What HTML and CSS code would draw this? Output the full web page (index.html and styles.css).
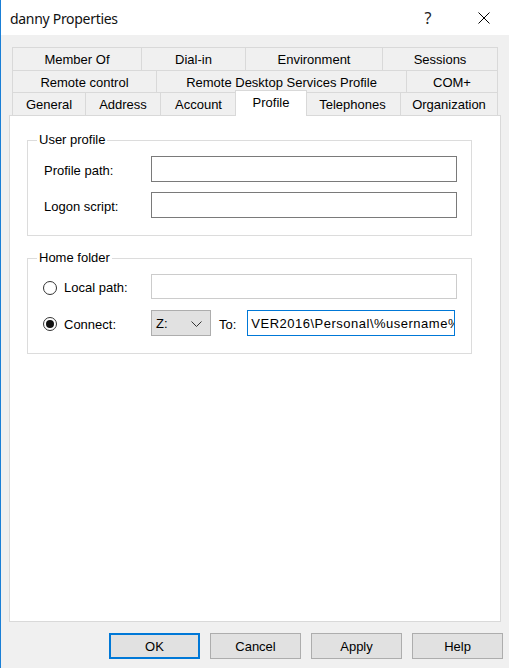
FILE: index.html
```html
<!DOCTYPE html>
<html>
<head>
<meta charset="utf-8">
<link rel="stylesheet" href="styles.css">
</head>
<body>
<div class="window">
  <div class="titlebar">
    <span class="title">danny Properties</span>
    <div class="caption">
      <span class="cap-btn help-btn">?</span>
      <span class="cap-btn close-btn"><svg width="12" height="12" viewBox="0 0 12 12"><path d="M0.5 0.5L11.5 11.5M11.5 0.5L0.5 11.5" stroke="#000" stroke-width="1" fill="none"/></svg></span>
    </div>
  </div>
  <div class="content">
    <div class="tabs">
      <div class="tab-row row1">
        <div class="tab">Member Of</div>
        <div class="tab">Dial-in</div>
        <div class="tab">Environment</div>
        <div class="tab">Sessions</div>
      </div>
      <div class="tab-row row2">
        <div class="tab">Remote control</div>
        <div class="tab">Remote Desktop Services Profile</div>
        <div class="tab">COM+</div>
      </div>
      <div class="tab-row row3">
        <div class="tab">General</div>
        <div class="tab">Address</div>
        <div class="tab">Account</div>
        <div class="tab active">Profile</div>
        <div class="tab">Telephones</div>
        <div class="tab">Organization</div>
      </div>
    </div>
    <div class="panel">
      <fieldset class="group">
        <legend>User profile</legend>
        <div class="form-grid">
          <label class="lbl">Profile path:</label>
          <div class="textbox"></div>
          <label class="lbl">Logon script:</label>
          <div class="textbox"></div>
        </div>
      </fieldset>
      <fieldset class="group home">
        <legend>Home folder</legend>
        <div class="form-grid home-grid">
          <label class="radio"><span class="radio-circle"></span><span>Local path:</span></label>
          <div class="textbox disabled"></div>
          <label class="radio"><span class="radio-circle checked"><span class="dot"></span></span><span>Connect:</span></label>
          <div class="connect-row">
            <div class="select"><span>Z:</span><svg width="11" height="6" viewBox="0 0 11 6"><path d="M0.5 0.5L5.5 5.5L10.5 0.5" stroke="#333" stroke-width="1" fill="none"/></svg></div>
            <span class="to">To:</span>
            <div class="textbox focused"><span class="value">VER2016\Personal\%username%</span></div>
          </div>
        </div>
      </fieldset>
    </div>
    <div class="buttons">
      <div class="btn default">OK</div>
      <div class="btn">Cancel</div>
      <div class="btn">Apply</div>
      <div class="btn">Help</div>
    </div>
  </div>
</div>
</body>
</html>
```
FILE: styles.css
```css
html, body {
  margin: 0;
  padding: 0;
}
body {
  font-family: "Liberation Sans", Arial, sans-serif;
  font-size: 13px;
  color: #000;
  background: #f0f0f0;
}
.window {
  width: 509px;
  height: 668px;
  box-sizing: border-box;
  border-left: 1px solid #1a7fd6;
  background: #f0f0f0;
  display: flex;
  flex-direction: column;
  overflow: hidden;
}
.titlebar {
  height: 35px;
  flex: none;
  background: #fff;
  display: flex;
  align-items: center;
  justify-content: space-between;
}
.title {
  font-family: "Noto Sans", sans-serif;
  font-size: 14px;
  letter-spacing: -0.3px;
  padding-left: 9px;
  padding-top: 1px;
  color: #111;
}
.caption {
  display: flex;
  height: 35px;
}
.cap-btn {
  display: flex;
  align-items: center;
  justify-content: center;
  height: 35px;
  box-sizing: border-box;
}
.help-btn {
  width: 50px;
  font-family: "Noto Sans", sans-serif;
  font-size: 16px;
  padding-top: 1px;
  color: #222;
}
.close-btn {
  width: 56px;
  padding-left: 6px;
}
.content {
  display: flex;
  flex-direction: column;
  padding-top: 12px;
}
.tabs {
  margin: 0 11px;
}
.tab-row {
  display: grid;
  border-left: 1px solid #d9d9d9;
}
.row1 {
  grid-template-columns: 129px 104px 137px 115px;
  height: 23px;
}
.row2 {
  grid-template-columns: 144px 250px 91px;
  height: 22px;
}
.row3 {
  grid-template-columns: 73px 75px 76px 68px 96px 97px;
  height: 23px;
}
.tab {
  border-top: 1px solid #d9d9d9;
  border-right: 1px solid #d9d9d9;
  background: #f0f0f0;
  display: flex;
  align-items: center;
  justify-content: center;
  white-space: nowrap;
  padding-top: 1px;
  box-sizing: border-box;
}
.tab.active {
  background: #fff;
  margin: -2px -2px -1px -2px;
  border: 1px solid #d9d9d9;
  border-bottom: none;
  position: relative;
  z-index: 1;
  align-items: flex-start;
  padding-top: 4px;
}
.panel {
  margin: 0 8px;
  height: 507px;
  box-sizing: border-box;
  background: #fff;
  border: 1px solid #d9d9d9;
  padding: 16px 28px 0 17px;
}
.group {
  margin: 0;
  padding: 0;
  border: 1px solid #dcdcdc;
  min-width: 0;
}
.group legend {
  margin-left: 9px;
  padding: 0 2px;
  line-height: 16px;
}
.group.home {
  margin-top: 14px;
}
.form-grid {
  display: grid;
  grid-template-columns: 107px 306px;
  row-gap: 10px;
  align-items: center;
  padding: 8px 14px 17px 16px;
}
.home-grid {
  padding-top: 8px;
  row-gap: 11px;
}
.lbl {
  padding-top: 3px;
}
.textbox {
  height: 26px;
  box-sizing: border-box;
  border: 1px solid #7a7a7a;
  background: #fff;
  overflow: hidden;
  white-space: nowrap;
  display: flex;
  align-items: center;
}
.textbox.disabled {
  border-color: #cccccc;
  height: 25px;
}
.textbox.focused {
  border-color: #0078d7;
  flex: 1;
  min-width: 0;
  margin-right: 2px;
}
.value {
  padding-left: 3px;
  padding-top: 1px;
  letter-spacing: 0.5px;
}
.radio {
  display: flex;
  align-items: center;
  gap: 7px;
  margin-left: -1px;
  padding-top: 2px;
}
.radio-circle {
  width: 14px;
  height: 14px;
  box-sizing: border-box;
  border: 1px solid #333;
  border-radius: 50%;
  background: #fff;
  display: flex;
  align-items: center;
  justify-content: center;
  flex: none;
}
.dot {
  width: 8px;
  height: 8px;
  border-radius: 50%;
  background: #111;
}
.connect-row {
  display: flex;
  align-items: center;
}
.select {
  width: 60px;
  height: 26px;
  box-sizing: border-box;
  background: #e1e1e1;
  border: 1px solid #adadad;
  display: flex;
  align-items: center;
  justify-content: space-between;
  padding: 1px 8px 0 4px;
  flex: none;
}
.to {
  margin-left: 8px;
  margin-right: 11px;
  padding-top: 2px;
}
.buttons {
  margin-top: 11px;
  display: flex;
  justify-content: flex-end;
  gap: 10px;
  padding-right: 6px;
}
.btn {
  width: 91px;
  height: 26px;
  box-sizing: border-box;
  background: #e1e1e1;
  border: 1px solid #adadad;
  display: flex;
  align-items: center;
  justify-content: center;
  padding-top: 1px;
}
.btn.default {
  border: 2px solid #0078d7;
}
```
